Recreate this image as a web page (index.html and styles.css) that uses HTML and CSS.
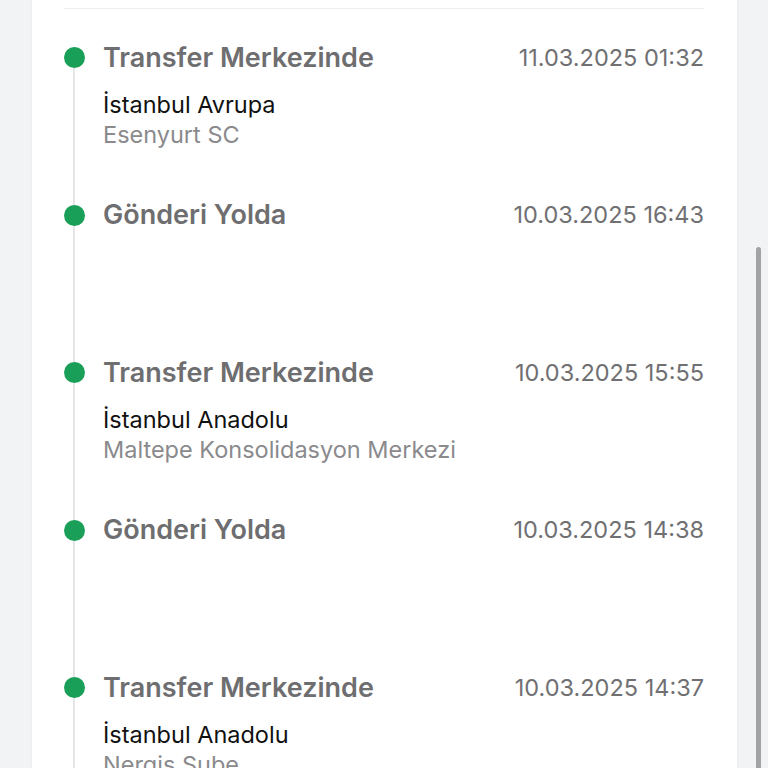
FILE: index.html
```html
<!DOCTYPE html>
<html lang="tr">
<head>
    <meta charset="UTF-8">
    <meta name="viewport" content="width=device-width, initial-scale=1.0">
    <title>Gönderi Takibi</title>
    <link rel="stylesheet" href="styles.css">
</head>
<body>
    <div class="card">
        <div class="divider"></div>

        <!-- Gönderi hareketleri -->
        <div class="timeline">
            <div class="step">
                <span class="dot"></span>
                <div class="step-head">
                    <span class="step-title">Transfer Merkezinde</span>
                    <span class="step-date">11.03.2025 01:32</span>
                </div>
                <div class="step-city">İstanbul Avrupa</div>
                <div class="step-branch">Esenyurt SC</div>
            </div>

            <div class="step">
                <span class="dot"></span>
                <div class="step-head">
                    <span class="step-title">Gönderi Yolda</span>
                    <span class="step-date">10.03.2025 16:43</span>
                </div>
            </div>

            <div class="step">
                <span class="dot"></span>
                <div class="step-head">
                    <span class="step-title">Transfer Merkezinde</span>
                    <span class="step-date">10.03.2025 15:55</span>
                </div>
                <div class="step-city">İstanbul Anadolu</div>
                <div class="step-branch">Maltepe Konsolidasyon Merkezi</div>
            </div>

            <div class="step">
                <span class="dot"></span>
                <div class="step-head">
                    <span class="step-title">Gönderi Yolda</span>
                    <span class="step-date">10.03.2025 14:38</span>
                </div>
            </div>

            <div class="step">
                <span class="dot"></span>
                <div class="step-head">
                    <span class="step-title">Transfer Merkezinde</span>
                    <span class="step-date">10.03.2025 14:37</span>
                </div>
                <div class="step-city">İstanbul Anadolu</div>
                <div class="step-branch">Nergis Şube</div>
            </div>
        </div>
    </div>

    <div class="scroll-thumb"></div>
</body>
</html>
```

FILE: styles.css
```css
body {
    font-family: Inter, "Noto Sans", sans-serif;
    margin: 0;
    padding: 0;
    background-color: #f2f3f5;
    height: 768px;
    overflow: hidden;
}
.card {
    width: 705px;
    margin-left: 32px;
    min-height: 768px;
    background-color: white;
    padding: 0 33px 0 32px;
    box-sizing: border-box;
    box-shadow: 0 0 3px rgba(0,0,0,0.05);
}
.divider {
    height: 8px;
    border-bottom: 1px solid #eceef0;
}
.timeline {
    padding-top: 31px;
}
.step {
    position: relative;
    height: 157.5px;
    padding-left: 39px;
    box-sizing: border-box;
}
.step::before {
    content: "";
    position: absolute;
    left: 9px;
    top: 0;
    bottom: 0;
    width: 2px;
    background-color: #e6e6e8;
}
.step:first-child::before {
    top: 17px;
}
.step .dot {
    position: absolute;
    left: 0;
    top: 7px;
    width: 21px;
    height: 21px;
    border-radius: 50%;
    background-color: #1a9f58;
}
.step-head {
    display: flex;
    justify-content: space-between;
    align-items: center;
    height: 34px;
}
.step-title {
    font-size: 27px;
    font-weight: 600;
    color: #6e6e70;
}
.step-date {
    font-size: 23.5px;
    color: #707073;
}
.step-city {
    margin-top: 16px;
    font-size: 23.5px;
    line-height: 30px;
    color: #111;
}
.step-branch {
    font-size: 23.5px;
    line-height: 30px;
    color: #8a8a8d;
}
.scroll-thumb {
    position: absolute;
    left: 756px;
    top: 247px;
    width: 5px;
    height: 540px;
    border-radius: 3px;
    background-color: #a3a3a5;
}
```
